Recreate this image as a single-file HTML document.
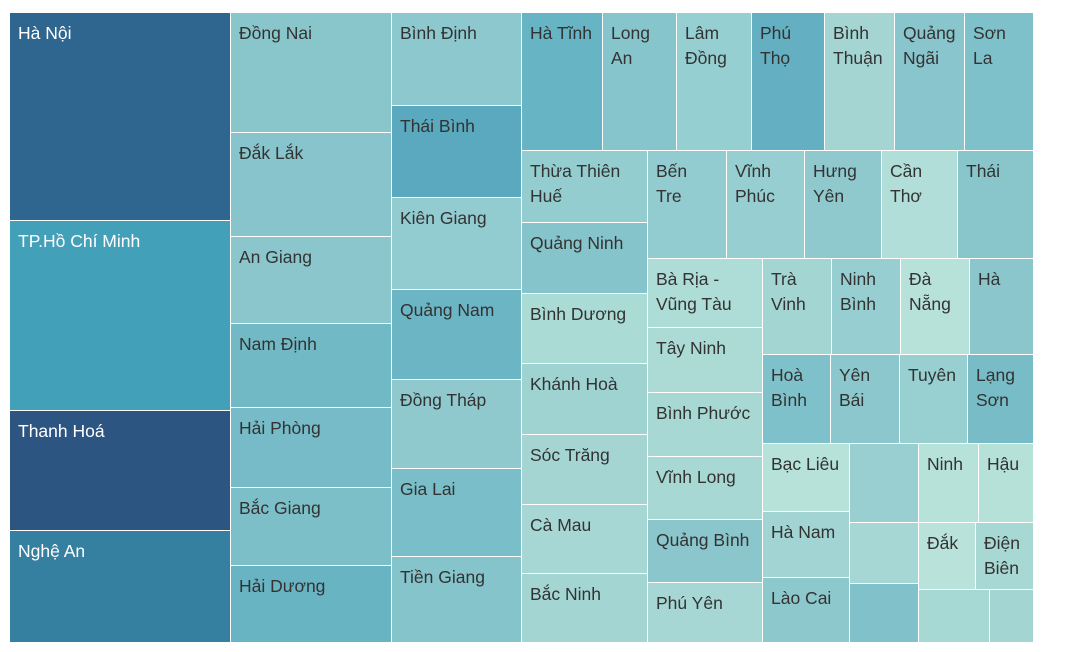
<!DOCTYPE html>
<html><head><meta charset="utf-8"><style>
html,body{margin:0;padding:0;background:#fff;width:1080px;height:652px;overflow:hidden}
.t{position:absolute;box-sizing:border-box;border-right:1px solid #fff;border-bottom:1px solid #fff;
font-family:"Liberation Sans","DejaVu Sans",sans-serif;font-size:17.5px;line-height:25px;color:#333;padding:8px 0 0 8px;overflow:hidden}
.w{color:#fff}
</style></head><body>
<div id="c"></div>
<script>
var d=[
[10,13,231,221,'#2e6690','Hà Nội',1],
[10,221,231,411,'#43a0b9','TP.Hồ Chí Minh',1],
[10,411,231,531,'#2c5581','Thanh Hoá',1],
[10,531,231,643,'#357fa0','Nghệ An',1],
[231,13,392,133,'#88c6cc','Đồng Nai'],
[231,133,392,237,'#87c4cc','Đắk Lắk'],
[231,237,392,324,'#8ac6cc','An Giang'],
[231,324,392,408,'#72b9c6','Nam Định'],
[231,408,392,488,'#76bbc7','Hải Phòng'],
[231,488,392,566,'#7cbfc9','Bắc Giang'],
[231,566,392,643,'#69b4c3','Hải Dương'],
[392,13,522,106,'#8dc8ce','Bình Định'],
[392,106,522,198,'#5aa9bf','Thái Bình'],
[392,198,522,290,'#92cbd0','Kiên Giang'],
[392,290,522,380,'#6cb5c4','Quảng Nam'],
[392,380,522,469,'#8fc9ce','Đồng Tháp'],
[392,469,522,557,'#79bec8','Gia Lai'],
[392,557,522,643,'#86c4cb','Tiền Giang'],
[522,13,603,151,'#66b4c4','Hà Tĩnh'],
[603,13,677,151,'#86c5cb','Long<br>An'],
[677,13,752,151,'#96cfd1','Lâm<br>Đồng'],
[752,13,825,151,'#64afc1','Phú<br>Thọ'],
[825,13,895,151,'#a4d5d2','Bình<br>Thuận'],
[895,13,965,151,'#88c5cc','Quảng<br>Ngãi'],
[965,13,1034,151,'#7fc1ca','Sơn<br>La'],
[522,151,648,223,'#93cdd0','Thừa Thiên<br>Huế'],
[522,223,648,294,'#86c4cb','Quảng Ninh'],
[522,294,648,364,'#abdbd5','Bình Dương'],
[522,364,648,435,'#9fd3d1','Khánh Hoà'],
[522,435,648,505,'#a4d5d3','Sóc Trăng'],
[522,505,648,574,'#a7d7d4','Cà Mau'],
[522,574,648,643,'#a3d5d3','Bắc Ninh'],
[648,151,727,259,'#92cbd0','Bến<br>Tre'],
[727,151,805,259,'#96ced1','Vĩnh<br>Phúc'],
[805,151,882,259,'#8fc9ce','Hưng<br>Yên'],
[882,151,958,259,'#b1ded8','Cần<br>Thơ'],
[958,151,1034,259,'#89c6cc','Thái'],
[648,259,763,328,'#aedcd7','Bà Rịa -<br>Vũng Tàu'],
[648,328,763,393,'#acdbd6','Tây Ninh'],
[648,393,763,457,'#a8d8d4','Bình Phước'],
[648,457,763,520,'#a7d8d4','Vĩnh Long'],
[648,520,763,583,'#8ac6cc','Quảng Bình'],
[648,583,763,643,'#a6d7d4','Phú Yên'],
[763,259,832,355,'#a3d5d2','Trà<br>Vinh'],
[832,259,901,355,'#97ced1','Ninh<br>Bình'],
[901,259,970,355,'#b7e2da','Đà<br>Nẵng'],
[970,259,1034,355,'#8ac6cc','Hà'],
[763,355,831,444,'#7fc1ca','Hoà<br>Bình'],
[831,355,900,444,'#8bc7cc','Yên<br>Bái'],
[900,355,968,444,'#98cfd1','Tuyên'],
[968,355,1034,444,'#77bcc7','Lạng<br>Sơn'],
[763,444,850,512,'#b6e2da','Bạc Liêu'],
[763,512,850,578,'#a1d4d2','Hà Nam'],
[763,578,850,643,'#8dc8cd','Lào Cai'],
[850,444,919,523,'#99cfd1',''],
[850,523,919,584,'#a6d7d4',''],
[850,584,919,643,'#80c1ca',''],
[919,444,979,523,'#b7e2da','Ninh'],
[979,444,1034,523,'#b6e1d9','Hậu'],
[919,523,976,590,'#b9e3da','Đắk'],
[976,523,1034,590,'#a7d8d4','Điện<br>Biên'],
[919,590,990,643,'#a6d8d4',''],
[990,590,1034,643,'#a3d5d3','']
];
var h='';
d.forEach(function(r){h+='<div class="t'+(r[6]?' w':'')+'" style="left:'+r[0]+'px;top:'+r[1]+'px;width:'+(r[2]-r[0])+'px;height:'+(r[3]-r[1])+'px;background:'+r[4]+'">'+r[5]+'</div>';});
document.getElementById('c').innerHTML=h;
</script>
</body></html>
